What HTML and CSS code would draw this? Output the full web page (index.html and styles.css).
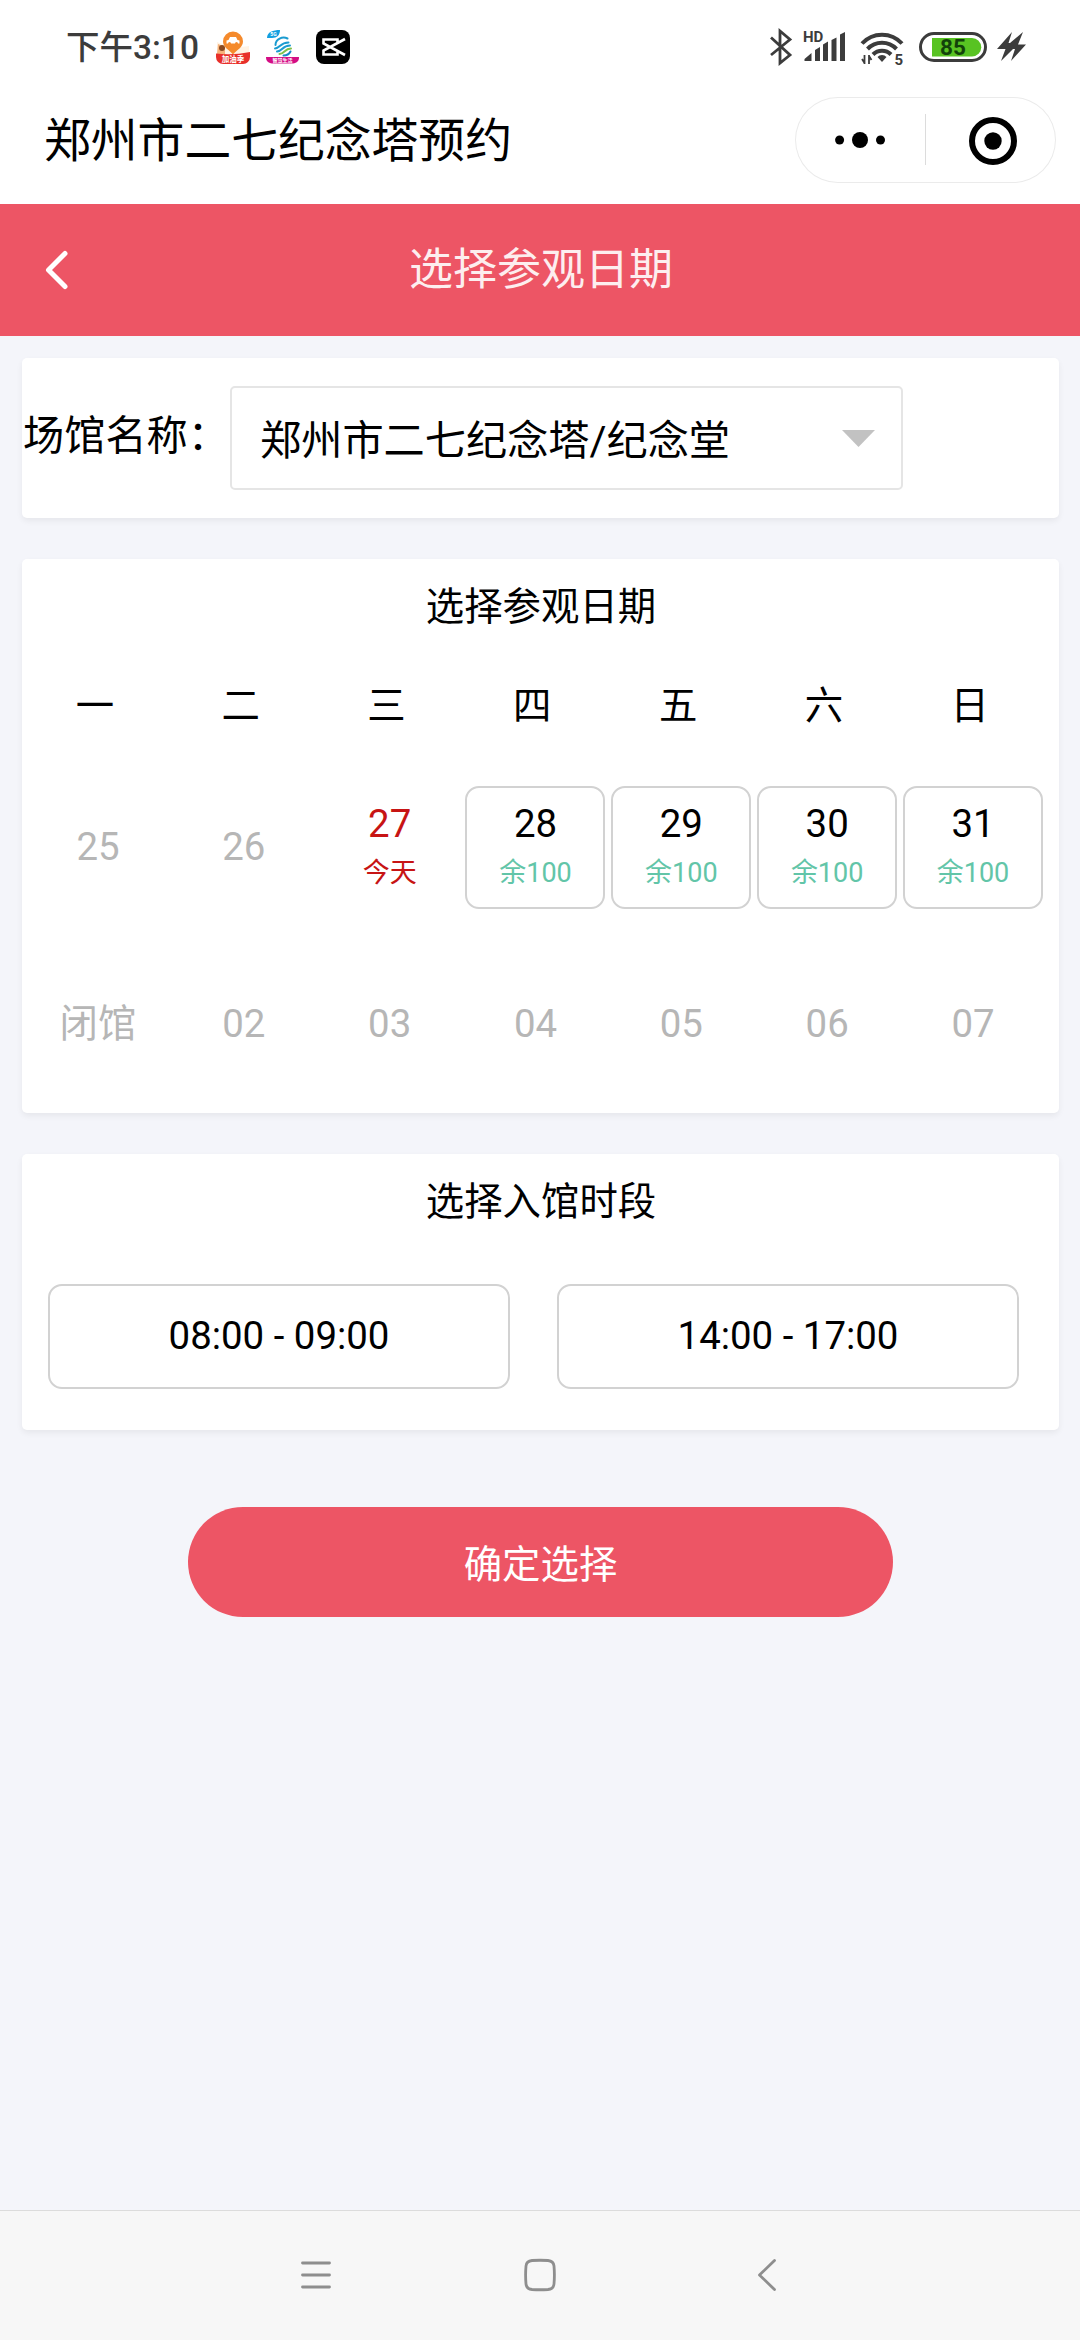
FILE: index.html
```html
<!DOCTYPE html>
<html lang="zh-CN">
<head>
<meta charset="utf-8">
<title>郑州市二七纪念塔预约</title>
<link rel="stylesheet" href="styles.css">
</head>
<body>
<div class="screen">
  <div class="status">
    <span class="time">下午3:10</span>
    <div class="apps">
      <svg width="34" height="34" viewBox="0 0 34 34">
        <path d="M1 12c8 4 24 6 32 4v8H1z" fill="#fff3e4"/>
        <path d="M2 14l7 3 0 7H1z" fill="#f7b27a"/><circle cx="6" cy="18" r="3" fill="#8a4a20"/>
        <path d="M17 1.500a10 10 0 0 1 10 10c0 6-6 8-10 13C13 19.500 7 17.500 7 11.500A10 10 0 0 1 17 1.500z" fill="#f58a2c"/>
        <path d="M10.500 10.500l2-.5 1.500-3h6l1.500 3 2 .5v3h-13z" fill="#fff"/>
        <circle cx="13.500" cy="13.500" r="1.500" fill="#f58a2c"/><circle cx="20.500" cy="13.500" r="1.500" fill="#f58a2c"/>
        <path d="M0 23.500q17 2 34-1.500v5a7 7 0 0 1-7 7H7a7 7 0 0 1-7-7z" fill="#e8302a"/>
        <text x="17" y="31.500" text-anchor="middle" class="app-label" font-size="7.500">加油季</text>
      </svg>
      <svg width="34" height="34" viewBox="0 0 34 34">
        <path d="M1 8C1 2 7 0 14 0c0 5-3 8-8 8H1z" fill="#129fe0"/>
        <text x="7.500" y="6" text-anchor="middle" class="app-label" font-size="5">5G</text>
        <g fill="none" stroke-width="2" stroke-linecap="round">
          <path d="M9.500 15c0-6 7-9 12-6.500M9 18.500c5 0 5-6 13.500-6M11 21.500c6-.5 5-6 13-6" stroke="#1a9bd0"/>
          <path d="M13.500 24c5 0 5-5.500 11.500-5.500" stroke="#7fc04a"/>
          <path d="M17.500 25.500c4 0 6-2 7-4" stroke="#1589c8"/>
        </g>
        <path d="M0 27h33c0 4-2 6-6 6.500H6C2 33 0 31 0 27z" fill="#d40d84"/>
        <text x="16.500" y="32.300" text-anchor="middle" class="app-label" font-size="5">智慧生活</text>
      </svg>
      <svg width="34" height="34" viewBox="0 0 34 34">
        <rect width="34" height="34" rx="8" fill="#000"/>
        <path d="M29 9L7.500 20.500v4h14V21.500M29 25L7.500 13.500v-4h14v3" fill="none" stroke="#fff" stroke-width="2.600"/>
      </svg>
    </div>
    <svg class="signals" width="260" height="48" viewBox="768 22 260 48">
      <path d="M771 37.500L790 55l-10 8V31l10 8.500L771 55" fill="none" stroke="#3c3c3c" stroke-width="2.800"/>
      <text x="803" y="42" class="hd">HD</text>
      <g fill="#3c3c3c">
        <path d="M804.500 61v-2l7-6v8zM815 61V50l5-3v14zM823 61V44.500l5-3V61zM831.500 61V40l5-2.500V61zM840 61V34.500l5-2.500v29z"/>
        <path d="M882 62l-4.500-5a6 6 0 0 1 9 0z"/>
        <path d="M997 49l15-17-3.500 11 1.500 0 13-11-5 12.500h8L1011 61l4-12-2 0-12 12 4.500-12z"/>
      </g>
      <g fill="none" stroke="#3c3c3c" stroke-width="4">
        <path d="M862 43.500a27 27 0 0 1 40 0M867.500 49a20 20 0 0 1 29 0" /><path d="M873 54.500a12.500 12.500 0 0 1 18 0"/>
        <path d="M864.500 55v9M869 55v9M862 59l2.500 4M871.500 60l-2.500-4" stroke-width="1.800"/>
      </g>
      <text x="894.500" y="64.500" class="wifi-num">5</text>
      <rect x="920.500" y="33.500" width="65" height="27" rx="13.500" fill="#fff" stroke="#3c3c3c" stroke-width="3"/>
      <path d="M932 38h40a9 9 0 0 1 0 18.500H932z" fill="#58c322"/>
      <text x="953" y="55" text-anchor="middle" class="battery-num">85</text>
    </svg>
  </div>

  <div class="titlebar">
    <h1 class="app-title">郑州市二七纪念塔预约</h1>
    <div class="capsule">
      <svg width="261" height="86" viewBox="0 0 261 86">
        <circle cx="44.600" cy="43" r="4.500"/><circle cx="65" cy="43" r="8"/><circle cx="85.500" cy="43" r="4.500"/>
        <path d="M130.500 17v51" stroke="#dcdcdc"/>
        <circle cx="198" cy="44" r="21" fill="none" stroke="#000" stroke-width="6"/><circle cx="198" cy="44" r="8.700"/>
      </svg>
    </div>
  </div>

  <header class="header">
    <svg class="back" width="24" height="40" viewBox="0 0 24 40"><path d="M21 3.500L4.500 20 21 36.500" fill="none" stroke="#fff" stroke-width="5" stroke-linecap="round" stroke-linejoin="round"/></svg>
    <h2 class="header-title">选择参观日期</h2>
  </header>

  <main class="content">
    <section class="card venue">
      <span class="venue-label">场馆名称：</span>
      <div class="select">
        <span>郑州市二七纪念塔/纪念堂</span>
        <svg width="33" height="17" viewBox="0 0 33 17"><path d="M0 0h33L16.500 17z" fill="#c2c2c2"/></svg>
      </div>
    </section>

    <section class="card calendar">
      <h3 class="card-title">选择参观日期</h3>
      <div class="weekdays"><span>一</span><span>二</span><span>三</span><span>四</span><span>五</span><span>六</span><span>日</span></div>
      <div class="days">
        <div class="day off">25</div>
        <div class="day off">26</div>
        <div class="day today"><b>27</b><small>今天</small></div>
        <div class="day open"><b>28</b><small>余100</small></div>
        <div class="day open"><b>29</b><small>余100</small></div>
        <div class="day open"><b>30</b><small>余100</small></div>
        <div class="day open"><b>31</b><small>余100</small></div>
        <div class="day off">闭馆</div>
        <div class="day off">02</div>
        <div class="day off">03</div>
        <div class="day off">04</div>
        <div class="day off">05</div>
        <div class="day off">06</div>
        <div class="day off">07</div>
      </div>
    </section>

    <section class="card times">
      <h3 class="card-title">选择入馆时段</h3>
      <div class="slots">
        <div class="slot">08:00 - 09:00</div>
        <div class="slot">14:00 - 17:00</div>
      </div>
    </section>

    <button class="confirm" type="button">确定选择</button>
  </main>

  <nav class="navbar">
    <svg width="34" height="34" viewBox="0 0 34 34"><path d="M3.500 5h27M3.500 17h27M3.500 29h27"/></svg>
    <svg width="34" height="34" viewBox="0 0 34 34"><path d="M9 2.500Q17 2 25 2.500Q30.500 3 31 8Q31.800 17 31 26Q30.500 31 25 31.500Q17 32 9 31.500Q3.500 31 3 26Q2.200 17 3 8Q3.500 3 9 2.500z"/></svg>
    <svg width="34" height="34" viewBox="0 0 34 34"><path d="M27.500 2.500L12.500 17l15 14.500"/></svg>
  </nav>
</div>
</body>
</html>
```

FILE: styles.css
```css
* { box-sizing: border-box; }

body {
  margin: 0;
  font-family: Roboto, "Noto Sans CJK SC", sans-serif;
  color: #000;
}

h1, h2, h3 { margin: 0; font-weight: 400; }
svg { display: block; flex: none; }

.screen {
  display: flex;
  flex-direction: column;
  width: 1080px;
  height: 2340px;
  overflow: hidden;
  background: #f4f5fa;
}

.status {
  display: flex;
  align-items: center;
  height: 94px;
  padding: 0 52px 0 66px;
  background: #fff;
}
.time {
  width: 150px;
  padding-top: 2px;
  font-size: 33.500px;
  font-weight: 500;
  line-height: 40px;
  color: #3c3c3c;
  white-space: nowrap;
}
.apps { display: flex; gap: 16px; }
.signals { margin-left: auto; margin-top: -2px; }
.app-label { fill: #fff; font-weight: 700; }
.hd { font-size: 15px; font-weight: 700; fill: #3c3c3c; }
.wifi-num { font-size: 15px; font-weight: 700; fill: #3c3c3c; }
.battery-num { font-size: 22.500px; font-weight: 700; fill: #12420a; }

.titlebar {
  display: flex;
  align-items: center;
  justify-content: space-between;
  height: 110px;
  padding: 0 24px 18px 44px;
  background: #fff;
}
.app-title { font-size: 46.800px; line-height: 60px; padding-top: 2px; }
.capsule {
  display: flex;
  width: 261px;
  height: 86px;
  border-radius: 43px;
  box-shadow: inset 0 0 0 1px #ebebeb;
}

.header {
  display: grid;
  grid-template-columns: 90px 1fr 90px;
  align-items: center;
  height: 132px;
  background: #ed5565;
}
.back { margin-left: 44px; }
.header-title {
  padding-left: 2px;
  text-align: center;
  font-size: 44px;
  line-height: 60px;
  color: #fff;
  opacity: .9;
}

.content {
  display: flex;
  flex: 1;
  flex-direction: column;
  padding: 22px 21px 0 22px;
}
.card {
  border-radius: 5px;
  background: #fff;
  box-shadow: 0 3px 6px rgba(0, 0, 0, .06);
}

.venue {
  display: flex;
  align-items: center;
  height: 160px;
  margin-bottom: 41px;
}
.venue-label { width: 208px; padding: 0 0 4px 1px; font-size: 41.200px; line-height: 60px; white-space: nowrap; }
.select {
  display: flex;
  align-items: center;
  justify-content: space-between;
  width: 673px;
  height: 104px;
  padding: 0 26px 0 28px;
  border: 2px solid #e5e5e5;
  border-radius: 5px;
  font-size: 41.200px;
  line-height: 60px;
  white-space: nowrap;
}
.select span { padding-top: 6px; }

.calendar { height: 554px; margin-bottom: 41px; }
.card-title {
  padding: 18px 0 0 1px;
  text-align: center;
  font-size: 38.400px;
  line-height: 60px;
}
.weekdays {
  display: grid;
  grid-template-columns: repeat(7, 145.800px);
  height: 60px;
  margin: 39px 0 0;
  text-align: center;
  font-size: 38.400px;
  line-height: 60px;
}
.days {
  display: grid;
  grid-template-columns: repeat(7, 140px);
  justify-content: space-between;
  row-gap: 54px;
  padding: 50px 16px 0 6px;
  font-size: 38.400px;
  line-height: 46px;
}
.day {
  display: flex;
  flex-direction: column;
  align-items: center;
  justify-content: center;
  height: 123px;
  padding-bottom: 2px;
  border: 2px solid transparent;
  border-radius: 14px;
}
.day b { padding-top: 4px; font-weight: 400; }
.day small { margin-top: 3px; font-size: 27px; line-height: 46px; }
.off { color: #b6b6b6; }
.today { color: #c71414; }
.open { border-color: #d2d2d2; }
.open small { color: #62c5a8; }

.times { height: 276px; margin-bottom: 77px; }
.slots {
  display: flex;
  gap: 47px;
  padding: 52px 0 0 26px;
}
.slot {
  width: 462px;
  height: 105px;
  border: 2px solid #d2d2d2;
  border-radius: 14px;
  text-align: center;
  font-size: 38.400px;
  line-height: 99px;
}

.confirm {
  align-self: center;
  width: 705px;
  height: 110px;
  padding: 5px 0 0;
  border: 0;
  border-radius: 55px;
  background: #ed5565;
  color: #fff;
  font-family: inherit;
  font-size: 38.400px;
  line-height: 60px;
}

.navbar {
  display: flex;
  justify-content: center;
  gap: 190px;
  height: 130px;
  padding-top: 47px;
  border-top: 1px solid #dcdcdc;
  background: #f7f7f7;
}
.navbar path {
  fill: none;
  stroke: #8e8e8e;
  stroke-width: 2.800;
  stroke-linecap: round;
  stroke-linejoin: round;
}
```
